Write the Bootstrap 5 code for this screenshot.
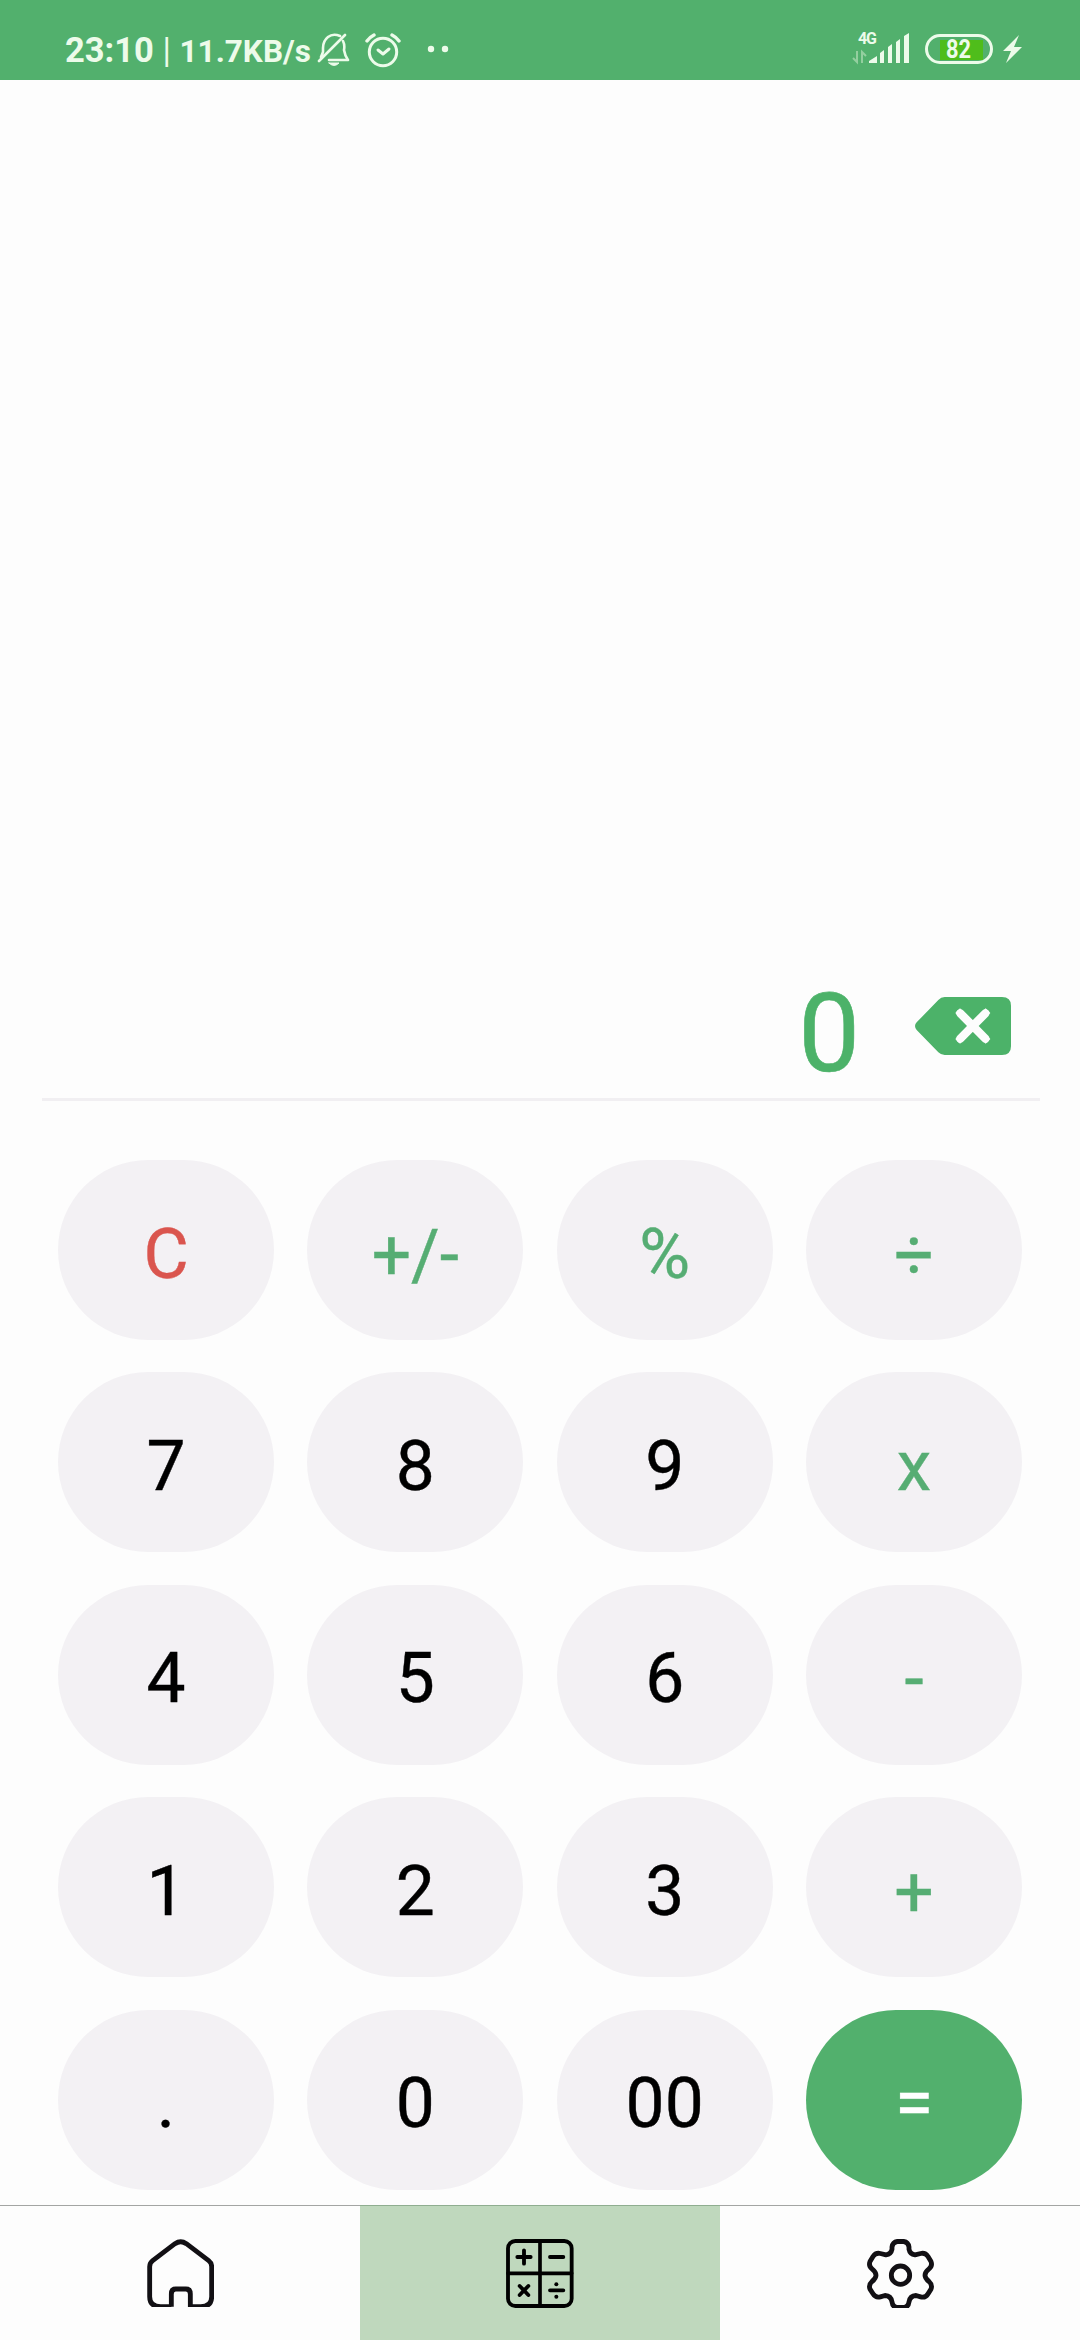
<!DOCTYPE html>
<html lang="en">
<head>
<meta charset="utf-8">
<meta name="viewport" content="width=device-width, initial-scale=1">
<title>Calculator</title>
<link href="https://cdn.jsdelivr.net/npm/bootstrap@5.3.0/dist/css/bootstrap.min.css" rel="stylesheet">
<style>
  :root { --leaf: #52b06d; --key: #f3f1f4; }
  body { font-family: Roboto, "Liberation Sans", sans-serif; background: #fdfdfd; color: #000; }
  .app { width: 1080px; height: 2340px; }
  .statusbar { height: 80px; background: var(--leaf); color: #edfbea; padding: 32px 57px 0 65px; }
  .statusbar svg { display: block; flex: none; }
  .signal { margin-top: -8px; }
  .clock { font-size: 34.5px; font-weight: 700; line-height: 36px; white-space: pre; }
  .clock .sep { font-weight: 400; }
  .speed { font-size: 31.5px; }
  .readout { height: 1021px; margin: 0 40px 0 42px; padding-right: 29px; border-bottom: 3px solid #f1eff2; }
  .amount { font-size: 110px; line-height: 129px; color: #4cb269; -webkit-text-stroke: .6px #4cb269; }
  .erase { margin: 0 0 43px 55px; }
  .keypad { display: grid; grid-template-columns: repeat(4, 216px); grid-auto-rows: 180px; justify-content: space-between; row-gap: 32.4px; margin: 59px 58px 0; }
  .key { background: var(--key); border: 0; border-radius: 90px; padding: 9px 0 0; font-size: 69.5px; line-height: 82px; color: #000; -webkit-text-stroke: .4px currentColor; }
  .key.op { color: #56ad73; }
  .key.sign { padding-top: 11px; }
  .key.clear { color: #da554e; }
  .key.equals { background: var(--leaf); color: #fff; }
  .tabs { height: 135px; border-top: 1px solid #a3a5a3; background: #fdfdfd; }
  .tab-item.active { background: #bfd8bd; margin-top: -1px; border-top: 1px solid #8fae90; }
</style>
<script src="https://cdn.jsdelivr.net/npm/bootstrap@5.3.0/dist/js/bootstrap.bundle.min.js"></script>
</head>
<body>
<div class="app d-flex flex-column overflow-hidden">
  <header class="statusbar d-flex align-items-start justify-content-between">
    <div class="d-flex align-items-start">
      <div class="clock">23:10 <span class="sep">|</span> <span class="speed">11.7KB/s</span></div>
      <svg style="margin-left:6px" width="33" height="35" viewBox="0 0 33 35" fill="none" stroke="#edfbea" stroke-width="2.6" stroke-linecap="round" stroke-linejoin="round"><path d="M2 29L28 3M23 4Q16 1 11 5Q6 9 6 16V20L4 25M26 9Q28 13 27 18Q28 24 31 28H12"/><path d="M12 31H22Q17 36 12 31Z" fill="#edfbea" stroke-width="1"/></svg>
      <svg style="margin-left:15px" width="36" height="36" viewBox="0 0 36 36" fill="none" stroke="#edfbea" stroke-width="3" stroke-linecap="round" stroke-linejoin="round"><circle cx="18" cy="20" r="13.7"/><path d="M2 9Q5 5 9 3M27 3Q31 5 34 9" stroke-width="3.4"/><path d="M13 18L18 22L24 17"/></svg>
      <svg style="margin-left:26px" width="22" height="36" viewBox="0 0 22 36" fill="#edfbea"><circle cx="4" cy="17" r="3.2"/><circle cx="18" cy="17" r="3.2"/></svg>
    </div>
    <div class="d-flex align-items-start">
      <svg class="signal" width="59" height="42" viewBox="0 -8 59 42" fill="#edfbea">
        <text x="7" y="12" font-family="Roboto, sans-serif" font-size="16" font-weight="700" textLength="19">4G</text>
        <path d="M6 19V30L2 26M11 31V20L15 24" fill="none" stroke="#94cf9f" stroke-width="2"/>
        <path d="M18 31V29L26 24V31ZM29 31V21L33 18V31ZM37 31V15L41 12V31ZM45 31V10L49 7V31ZM53 31V4L58 1V31Z"/>
      </svg>
      <svg style="margin-left:15px" width="68" height="33" viewBox="0 0 68 33"><path d="M15 8H58V28H15Z" fill="#4fbd1b"/><rect x="1.5" y="3.5" width="65" height="27" rx="13.5" fill="none" stroke="#edfbea" stroke-width="3"/><text x="21" y="26" textLength="25" lengthAdjust="spacingAndGlyphs" font-family="Roboto, sans-serif" font-size="25" font-weight="700" fill="#edfbea">82</text></svg>
      <svg style="margin-left:10px" width="20" height="33" viewBox="0 0 20 33" fill="#edfbea"><path d="M16 3L0 19H8L3 31L19 15H11Z"/></svg>
    </div>
  </header>

  <main class="flex-grow-1">
    <section class="readout d-flex align-items-end justify-content-end">
      <output class="amount">0</output>
      <svg class="erase" width="96" height="58" viewBox="525 111 288 174"><path d="M614 111H786Q813 111 813 137V259Q813 285 786 285H614Q603 285 595 277L530 210Q520 198 530 187L595 120Q603 111 614 111Z" fill="#4cb269"/><path d="M661 160L736 236M736 160L661 236" stroke="#fdfdfd" stroke-width="25" stroke-linecap="round"/><path d="M660 159L737 237M737 159L660 237" stroke="#fdfdfd" stroke-width="20" stroke-linecap="square"/></svg>
    </section>
    <section class="keypad">
      <button class="key clear">C</button><button class="key op sign">+/-</button><button class="key op">%</button><button class="key op sign">÷</button>
      <button class="key">7</button><button class="key">8</button><button class="key">9</button><button class="key op">x</button>
      <button class="key">4</button><button class="key">5</button><button class="key">6</button><button class="key op sign">-</button>
      <button class="key">1</button><button class="key">2</button><button class="key">3</button><button class="key op sign">+</button>
      <button class="key">.</button><button class="key">0</button><button class="key">00</button><button class="key equals">=</button>
    </section>
  </main>

  <nav class="tabs d-flex">
    <a href="#" class="tab-item col-4 d-flex align-items-center justify-content-center" aria-label="Home">
      <svg width="67" height="68" viewBox="81 149 201 204" fill="none" stroke="#121014" stroke-width="14.5" stroke-linejoin="round"><path d="M154 352H122Q89 352 89 322V232Q89 221 98 214L165 163Q182 151 199 163L266 214Q275 221 275 232V322Q275 352 242 352H211V314Q211 299 198 299H167Q154 299 154 314V352"/></svg>
    </a>
    <a href="#" class="tab-item active col-4 d-flex align-items-center justify-content-center" aria-label="Calculator">
      <svg width="68" height="69" viewBox="199 147 204 207" fill="none" stroke="#000" stroke-width="11.5" stroke-linecap="round"><rect x="205" y="153" width="191" height="195" rx="22"/><path d="M301 153V348M205 250H396" stroke-width="11"/><path d="M253 181V221M233 201H273M331 201H371M240 288L266 315M266 288L240 315M331 301H371"/><circle cx="350" cy="283" r="6" fill="#000" stroke="none"/><circle cx="350" cy="320" r="6" fill="#000" stroke="none"/></svg>
    </a>
    <a href="#" class="tab-item col-4 d-flex align-items-center justify-content-center" aria-label="Settings">
      <svg width="67" height="69" viewBox="141 147 201 206" fill="none" stroke="#121014" stroke-width="14.5" stroke-linejoin="round"><circle cx="241.500" cy="255" r="27.500"/><path d="M232 154H251Q265 156 267 171V177Q270 192 285 194L302 190Q316 187 324 199L333 214Q338 227 327 236Q303 255 327 274Q338 284 333 297L324 311Q316 324 302 320L288 316Q270 317 267 335Q265 351 251 352H232Q218 351 216 335Q213 317 195 316L181 320Q167 324 159 311L150 297Q145 284 156 274Q180 255 156 236Q145 227 150 214L159 199Q167 187 181 190L198 194Q213 192 216 177V171Q218 156 232 154Z"/></svg>
    </a>
  </nav>
</div>
</body>
</html>
